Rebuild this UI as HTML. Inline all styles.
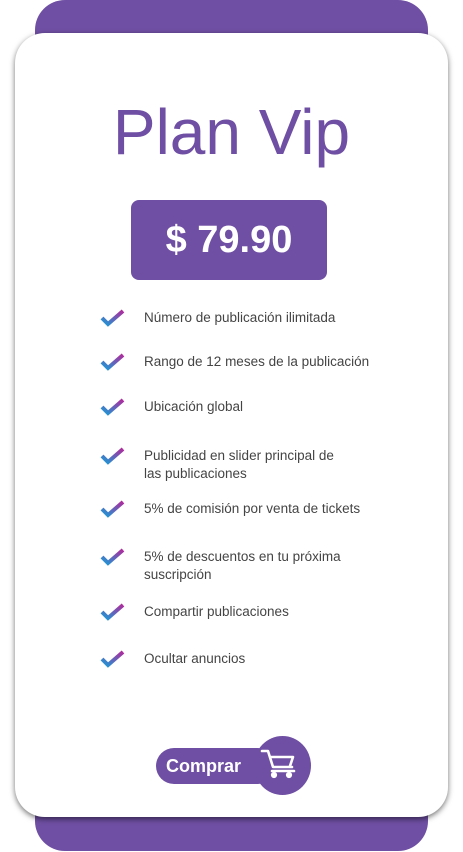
<!DOCTYPE html>
<html><head><meta charset="utf-8"><style>
body{margin:0;width:463px;height:852px;background:#fff;position:relative;overflow:hidden;font-family:"Liberation Sans",sans-serif}
.p{position:absolute;background:#6f4fa3}
.card{position:absolute;left:15px;top:33px;width:433px;height:784px;background:#fff;border-radius:30px;box-shadow:0 2px 6px rgba(0,0,0,.55)}
.t{position:absolute;color:#444;font-size:13.5px;line-height:18px}
.ck{position:absolute;left:100px;width:26px;height:20px}
</style></head><body>
<div class="p" style="left:35px;top:0;width:393px;height:80px;border-radius:30px"></div>
<div class="p" style="left:35px;top:770px;width:393px;height:81px;border-radius:30px"></div>
<div class="card"></div>
<div style="position:absolute;left:0;width:463px;top:92px;text-align:center;color:#6f4fa3;font-size:64px;line-height:80px">Plan Vip</div>
<div class="p" style="left:131px;top:200px;width:196px;height:80px;border-radius:8px;color:#fff;font-weight:bold;font-size:38px;line-height:80px;text-align:center">$ 79.90</div>
<svg width="0" height="0"><defs><linearGradient id="g" x1="0" y1="1" x2="1" y2="0"><stop offset="0" stop-color="#1a9ad6"/><stop offset="1" stop-color="#b02a9c"/></linearGradient></defs></svg>
<div id="list"></div>
<div class="p" style="left:156px;top:748px;width:120px;height:36px;border-radius:18px"></div>
<div style="position:absolute;left:166px;top:748px;color:#fff;font-weight:bold;font-size:18px;line-height:36px">Comprar</div>
<div class="p" style="left:254px;top:736px;width:57px;height:59px;border-radius:50%"></div>
<svg style="position:absolute;left:260px;top:748px" width="40" height="36" viewBox="0 0 40 36" fill="none" stroke="#fff" stroke-width="2.6" stroke-linejoin="round" stroke-linecap="round"><path d="M2 3h6l5 16h19"/><path d="M11 9h22l-3 9"/><circle cx="14" cy="27" r="1.8" fill="#fff"/><circle cx="29" cy="27" r="1.8" fill="#fff"/><path d="M12 23h22"/></svg>
<script>
var items=[[318,"Número de publicación ilimitada"],[362,"Rango de 12 meses de la publicación"],[407,"Ubicación global"],[456,"Publicidad en slider principal de<br>las publicaciones"],[509,"5% de comisión por venta de tickets"],[557,"5% de descuentos en tu próxima<br>suscripción"],[612,"Compartir publicaciones"],[659,"Ocultar anuncios"]];
var h="";items.forEach(function(it){var y=it[0];h+='<svg class="ck" style="top:'+(y-10)+'px" viewBox="0 0 26 20"><path d="M2 10l6 6L23 3" fill="none" stroke="url(#g)" stroke-width="4"/></svg><div class="t" style="left:144px;top:'+(y-9)+'px">'+it[1]+'</div>';});
document.getElementById("list").innerHTML=h;
</script>
</body></html>
